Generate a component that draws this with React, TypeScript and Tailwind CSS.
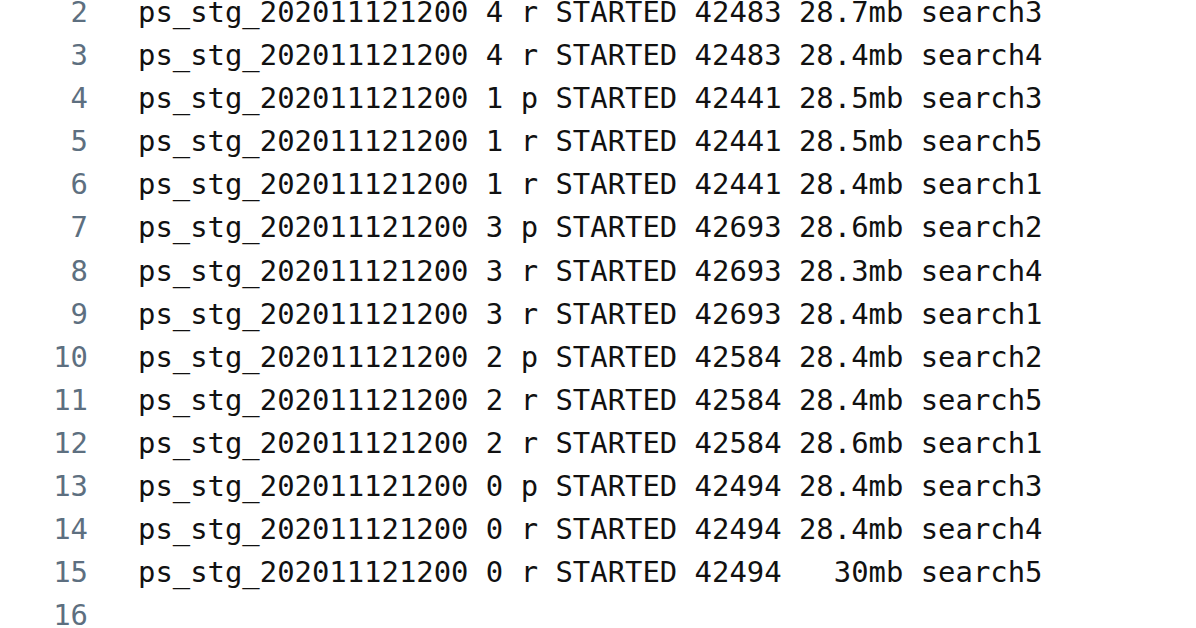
const rows = [
  '4 r STARTED 42483 28.7mb search3',
  '4 r STARTED 42483 28.4mb search4',
  '1 p STARTED 42441 28.5mb search3',
  '1 r STARTED 42441 28.5mb search5',
  '1 r STARTED 42441 28.4mb search1',
  '3 p STARTED 42693 28.6mb search2',
  '3 r STARTED 42693 28.3mb search4',
  '3 r STARTED 42693 28.4mb search1',
  '2 p STARTED 42584 28.4mb search2',
  '2 r STARTED 42584 28.4mb search5',
  '2 r STARTED 42584 28.6mb search1',
  '0 p STARTED 42494 28.4mb search3',
  '0 r STARTED 42494 28.4mb search4',
  '0 r STARTED 42494   30mb search5',
];

export default function App() {
  const lines = [...rows.map((r) => `ps_stg_202011121200 ${r}`), ''];

  return (
    <div className="h-[628px] w-[1196px] overflow-hidden bg-white font-['DejaVu_Sans_Mono',monospace] text-[28.9px] leading-[43.1px]">
      <div className="-mt-[9px]">
        {lines.map((text, i) => (
          <div key={i} className="flex">
            <span className="w-[88px] shrink-0 text-right text-[#5d6f80]">{i + 2}</span>
            <span className="whitespace-pre pl-[50px] text-[#111111]">{text}</span>
          </div>
        ))}
      </div>
    </div>
  );
}
